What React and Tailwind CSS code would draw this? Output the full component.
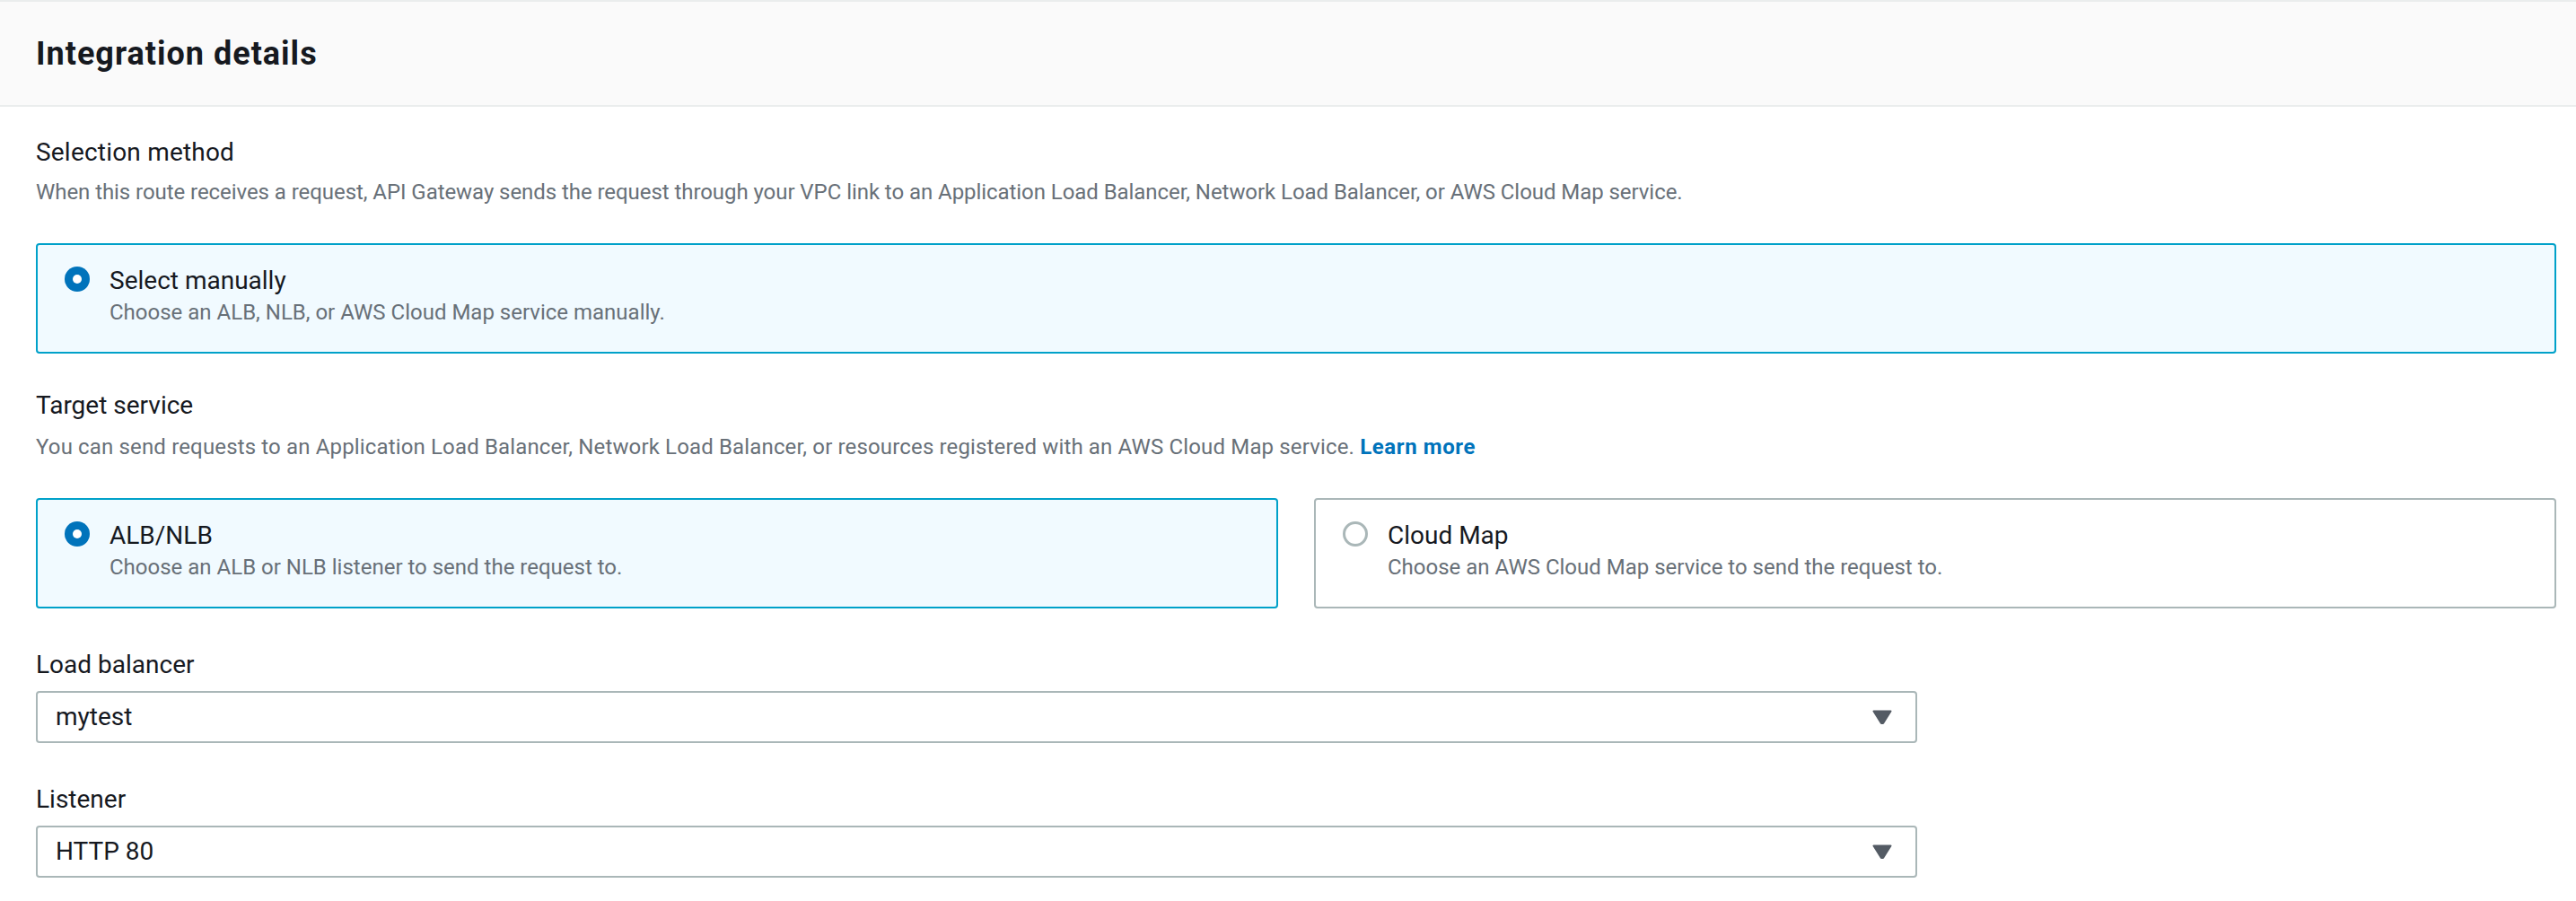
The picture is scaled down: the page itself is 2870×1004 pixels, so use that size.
import React from "react";

const font = { fontFamily: "Roboto, 'Liberation Sans', sans-serif" };

const Radio = ({ checked }) =>
  checked ? (
    <span className="mt-[2px] flex h-[28px] w-[28px] shrink-0 items-center justify-center rounded-full bg-[#0073bb]">
      <span className="h-[10px] w-[10px] rounded-full bg-white" />
    </span>
  ) : (
    <span className="mt-[2px] h-[28px] w-[28px] shrink-0 rounded-full border-[3px] border-[#aab7b8] bg-white" />
  );

const OptionCard = ({ checked, title, desc, className = "" }) => (
  <div
    className={`flex gap-[22px] rounded-[4px] border-2 px-[30px] pt-[22px] pb-[27px] ${
      checked ? "border-[#00a1c9] bg-[#f1faff]" : "border-[#aab7b8] bg-white"
    } ${className}`}
  >
    <Radio checked={checked} />
    <div>
      <div className="text-[28px] leading-[36px] text-[#16191f]">{title}</div>
      <div className="text-[24px] leading-[34px] text-[#687078]">{desc}</div>
    </div>
  </div>
);

const Arrow = () => (
  <svg width="22" height="16" viewBox="0 0 22 16">
    <path d="M1.5 1.5 H20.5 L12.2 14.6 Q11 16 9.8 14.6 Z" fill="#545b64" stroke="#545b64" strokeWidth="2" strokeLinejoin="round" />
  </svg>
);

const SelectBox = ({ value }) => (
  <div className="flex h-[58px] w-[2096px] items-center justify-between rounded-[4px] border-2 border-[#aab7b8] bg-white pl-[20px] pr-[26px]">
    <span className="text-[28px] text-[#16191f]">{value}</span>
    <Arrow />
  </div>
);

const Label = ({ children, className = "" }) => (
  <div className={`text-[28px] leading-[40px] text-[#16191f] ${className}`}>{children}</div>
);

const Desc = ({ children, className = "" }) => (
  <div className={`text-[24px] leading-[34px] text-[#687078] ${className}`}>{children}</div>
);

export default function App() {
  return (
    <div className="min-h-[1004px] w-full bg-white" style={font}>
      {/* Header */}
      <div className="flex h-[119px] items-center border-y-2 border-[#eaeded] bg-[#fafafa] px-[40px]">
        <h2 className="text-[36px] font-bold tracking-[1px] text-[#16191f]">Integration details</h2>
      </div>

      <div className="pl-[40px] pt-[31px] pr-[22px]">
        <Label className="tracking-[0.2px]">Selection method</Label>
        <Desc className="mt-[7px] tracking-[-0.06px]">
          When this route receives a request, API Gateway sends the request through your VPC link to an Application
          Load Balancer, Network Load Balancer, or AWS Cloud Map service.
        </Desc>

        <OptionCard
          className="mt-[40px]"
          checked
          title="Select manually"
          desc="Choose an ALB, NLB, or AWS Cloud Map service manually."
        />

        <Label className="mt-[38px]">Target service</Label>
        <Desc className="mt-[9px] tracking-[0.15px]">
          You can send requests to an Application Load Balancer, Network Load Balancer, or resources registered with an
          AWS Cloud Map service. <span className="font-bold tracking-[0.6px] text-[#0073bb]">Learn more</span>
        </Desc>

        <div className="mt-[40px] grid grid-cols-2 gap-[40px]">
          <OptionCard checked title="ALB/NLB" desc="Choose an ALB or NLB listener to send the request to." />
          <OptionCard title="Cloud Map" desc="Choose an AWS Cloud Map service to send the request to." />
        </div>

        <Label className="mt-[43px]">Load balancer</Label>
        <div className="mt-[9px]">
          <SelectBox value="mytest" />
        </div>

        <Label className="mt-[43px]">Listener</Label>
        <div className="mt-[9px]">
          <SelectBox value="HTTP 80" />
        </div>
      </div>
    </div>
  );
}
